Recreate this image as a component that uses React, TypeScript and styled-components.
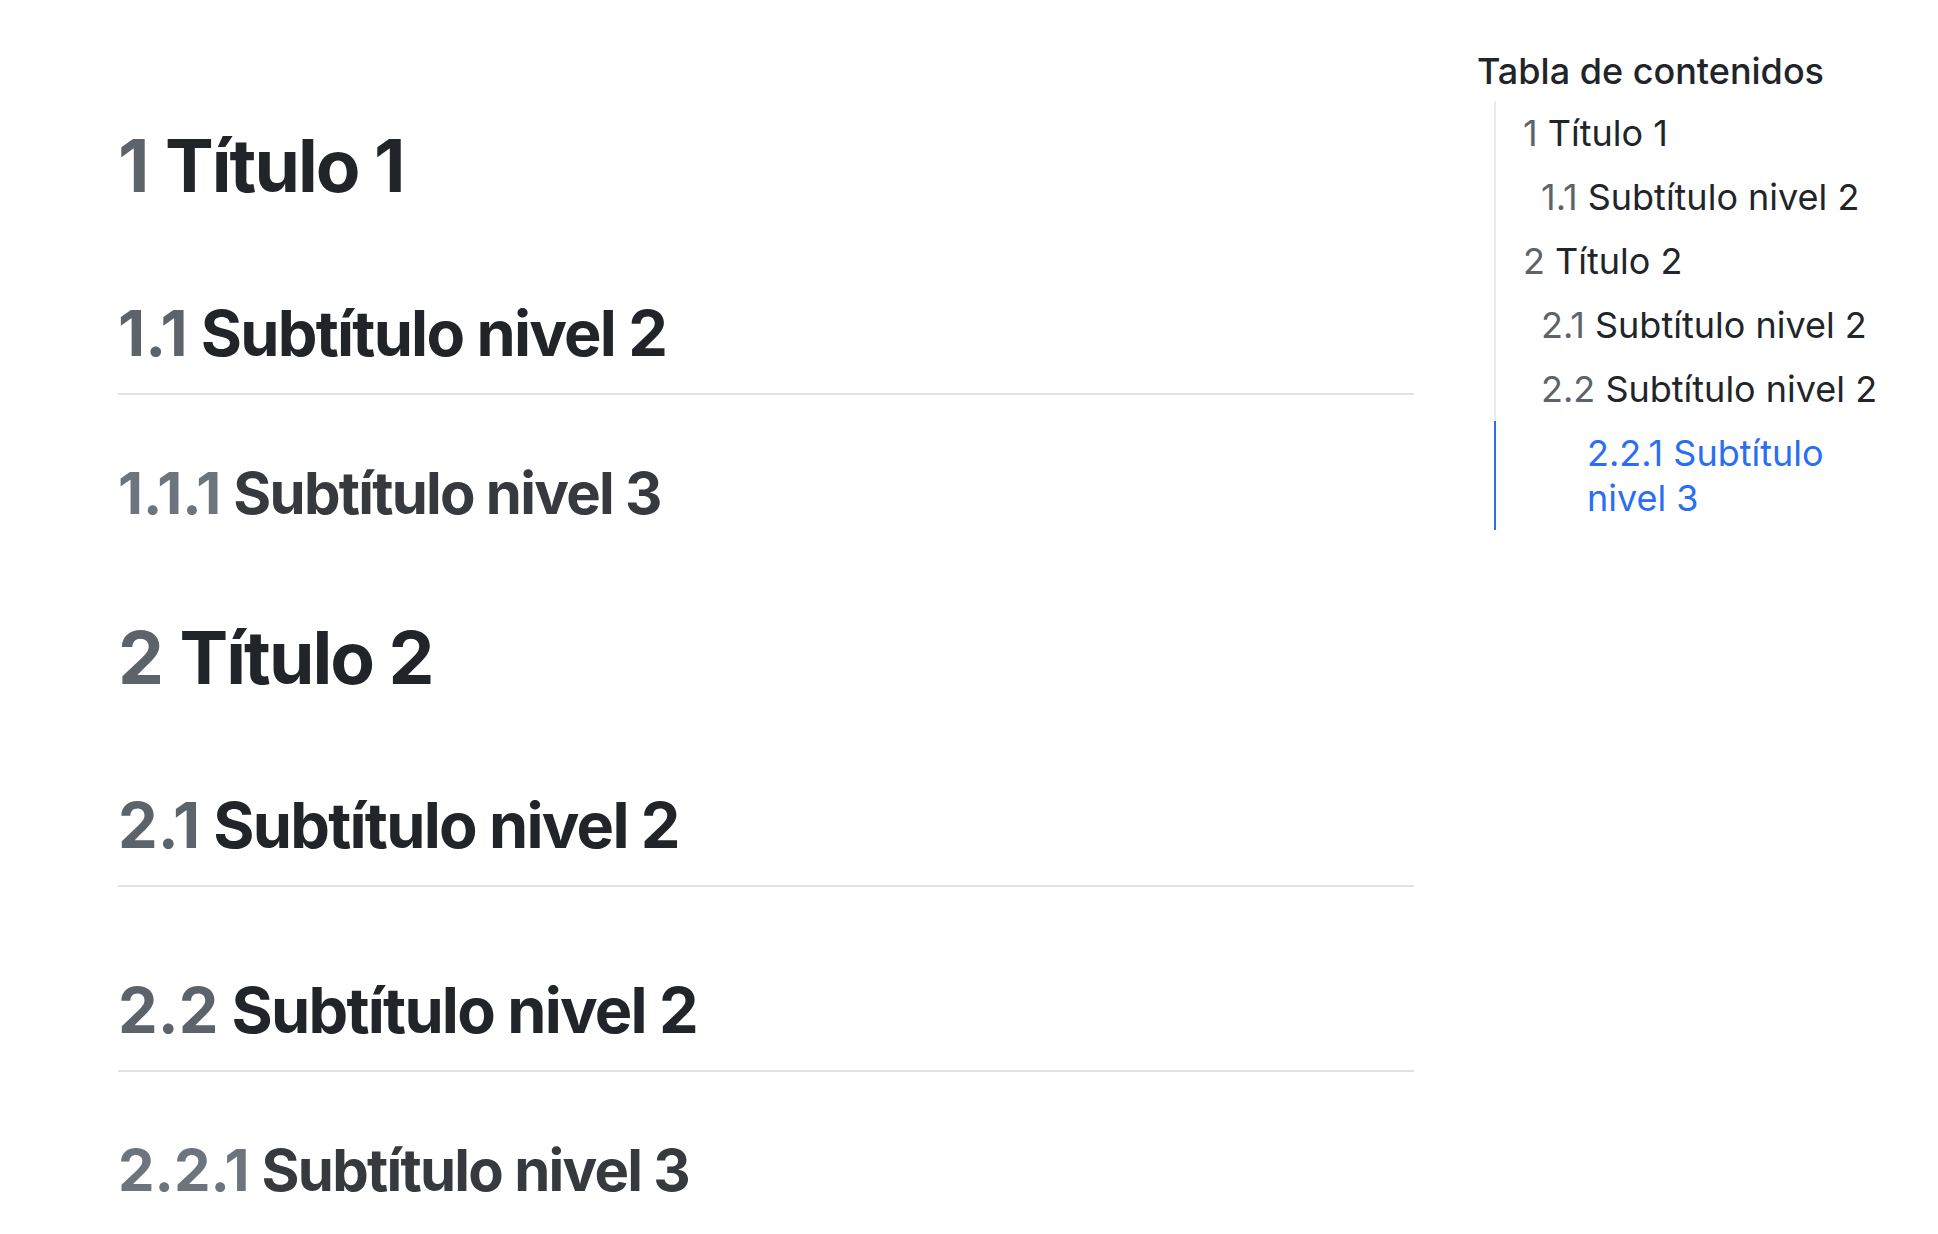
import React from "react";
import styled, { createGlobalStyle } from "styled-components";

const GlobalStyle = createGlobalStyle`
  html, body {
    margin: 0;
    padding: 0;
    background: #ffffff;
  }
  body {
    font-family: Inter, "Noto Sans", "Liberation Sans", sans-serif;
    color: #212529;
  }
`;

const Page = styled.div`
  display: grid;
  grid-template-columns: 1296px 418px;
  column-gap: 63px;
  padding-left: 118px;
  align-items: start;
`;

const Article = styled.main`
  padding-top: 122px;
  padding-bottom: 40px;
`;

const Num = styled.span<{ $tone: string }>`
  color: ${(p) => p.$tone};
  letter-spacing: 0;
`;

const H1 = styled.h1`
  margin: 86px 0 0;
  font-size: 73px;
  font-weight: 700;
  line-height: 1.2;
  letter-spacing: -0.026em;
  color: #212529;
  &:first-child {
    margin-top: 0;
  }
`;

const H2 = styled.h2`
  margin: 84px 0 0;
  padding-bottom: 21px;
  border-bottom: 2px solid #dee2e6;
  font-size: 63px;
  font-weight: 700;
  line-height: 78px;
  letter-spacing: -0.028em;
  color: #212529;
`;

const H3 = styled.h3`
  margin: 64px 0 0;
  font-size: 58px;
  font-weight: 700;
  line-height: 1.2;
  letter-spacing: -0.03em;
  color: #36393e;
`;

const Toc = styled.aside`
  padding-top: 50px;
`;

const TocTitle = styled.div`
  font-size: 36px;
  font-weight: 500;
  line-height: 42px;
  color: #212529;
  margin-bottom: 9px;
`;

const TocList = styled.ul`
  list-style: none;
  margin: 0 0 0 17px;
  padding: 0;
  border-left: 2px solid #e9ebef;
`;

const TocItem = styled.li<{ $level: number; $active?: boolean }>`
  padding: 9.5px 0 9.5px
    ${(p) => (p.$level === 1 ? 27 : p.$level === 2 ? 45 : 91)}px;
  font-size: 36px;
  line-height: 45px;
  font-weight: 400;
  color: ${(p) => (p.$active ? "#2a6ef2" : "#212529")};
  ${(p) =>
    p.$active
      ? `margin-left: -2px; border-left: 2px solid #2a6ef2;`
      : ""}
`;

const TocNum = styled.span<{ $active?: boolean }>`
  color: ${(p) => (p.$active ? "#2a6ef2" : "#5c636a")};
`;

type Entry = { num: string; text: string; level: number };

const entries: Entry[] = [
  { num: "1", text: "Título 1", level: 1 },
  { num: "1.1", text: "Subtítulo nivel 2", level: 2 },
  { num: "1.1.1", text: "Subtítulo nivel 3", level: 3 },
  { num: "2", text: "Título 2", level: 1 },
  { num: "2.1", text: "Subtítulo nivel 2", level: 2 },
  { num: "2.2", text: "Subtítulo nivel 2", level: 2 },
  { num: "2.2.1", text: "Subtítulo nivel 3", level: 3 },
];

const tocEntries: Entry[] = [
  { num: "1", text: "Título 1", level: 1 },
  { num: "1.1", text: "Subtítulo nivel 2", level: 2 },
  { num: "2", text: "Título 2", level: 1 },
  { num: "2.1", text: "Subtítulo nivel 2", level: 2 },
  { num: "2.2", text: "Subtítulo nivel 2", level: 2 },
  { num: "2.2.1", text: "Subtítulo nivel 3", level: 3 },
];

function Heading({ e }: { e: Entry }) {
  if (e.level === 1)
    return (
      <H1>
        <Num $tone="#5c636a">{e.num}</Num> {e.text}
      </H1>
    );
  if (e.level === 2)
    return (
      <H2>
        <Num $tone="#5c636a">{e.num}</Num> {e.text}
      </H2>
    );
  return (
    <H3>
      <Num $tone="#6c757d">{e.num}</Num> {e.text}
    </H3>
  );
}

export default function App() {
  return (
    <>
      <GlobalStyle />
      <Page>
        <Article>
          {entries.map((e) => (
            <Heading key={e.num} e={e} />
          ))}
        </Article>
        <Toc>
          <TocTitle>Tabla de contenidos</TocTitle>
          <TocList>
            {tocEntries.map((e) => {
              const active = e.num === "2.2.1";
              return (
                <TocItem key={e.num} $level={e.level} $active={active}>
                  <TocNum $active={active}>{e.num}</TocNum> {e.text}
                </TocItem>
              );
            })}
          </TocList>
        </Toc>
      </Page>
    </>
  );
}
